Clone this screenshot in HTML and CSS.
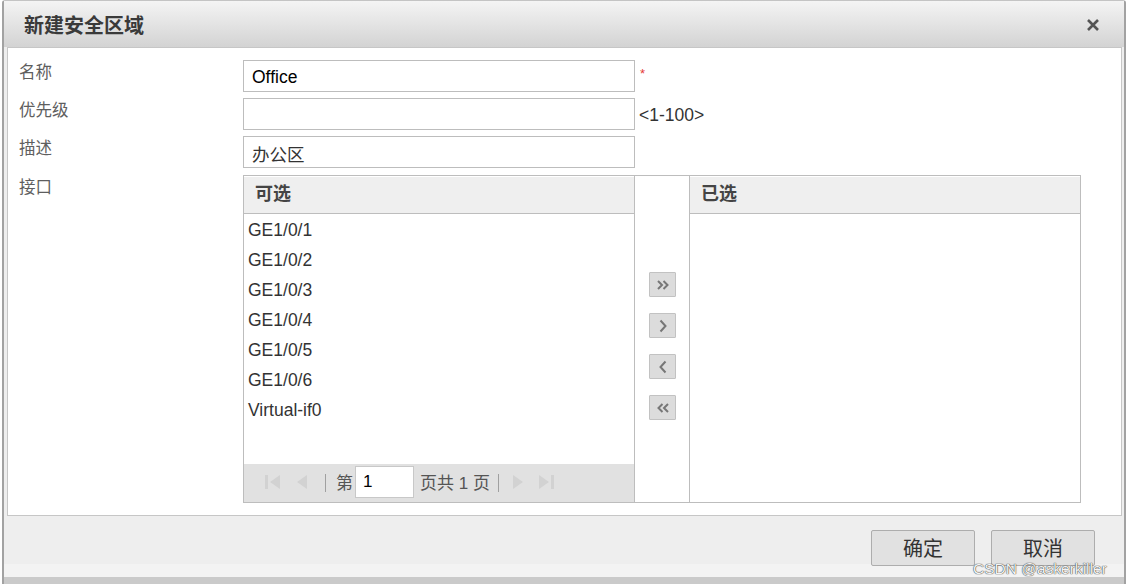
FILE: index.html
```html
<!DOCTYPE html>
<html lang="zh-CN">
  <head>
    <meta charset="utf-8" />
    <title>新建安全区域</title>
    <link rel="stylesheet" href="styles.css">
  </head>
  <body>
    <div class="dialog">
      <div class="dialog-header">
        <span class="dialog-title">新建安全区域</span>
        <span class="dialog-close" title="关闭">
          <svg width="14" height="14" viewBox="0 0 14 14"><path d="M2 2L12 12M12 2L2 12" stroke="#555" stroke-width="2.6" fill="none"/></svg>
        </span>
      </div>

      <div class="dialog-body">
        <div class="form-row">
          <label class="form-label">名称</label>
          <input class="form-input text-black" type="text" value="Office">
          <span class="required">*</span>
        </div>
        <div class="form-row">
          <label class="form-label">优先级</label>
          <input class="form-input" type="text" value="">
          <span class="form-hint">&lt;1-100&gt;</span>
        </div>
        <div class="form-row form-row-last">
          <label class="form-label">描述</label>
          <input class="form-input" type="text" value="办公区">
        </div>
        <div class="form-row">
          <label class="form-label">接口</label>
          <div class="transfer">
            <div class="transfer-panel">
              <div class="transfer-head">可选</div>
              <ul class="transfer-list">
                <li>GE1/0/1</li>
                <li>GE1/0/2</li>
                <li>GE1/0/3</li>
                <li>GE1/0/4</li>
                <li>GE1/0/5</li>
                <li>GE1/0/6</li>
                <li>Virtual-if0</li>
              </ul>
              <div class="pager">
                <svg class="pager-first" width="17" height="16" viewBox="0 0 17 16"><rect x="0" y="1" width="3" height="14" fill="#d2d2d2"/><path d="M15 1L5 8L15 15Z" fill="#d2d2d2"/></svg>
                <svg class="pager-prev" width="10" height="16" viewBox="0 0 10 16"><path d="M10 1L0 8L10 15Z" fill="#d2d2d2"/></svg>
                <span class="pager-sep"></span>
                <span class="pager-text">第</span>
                <input class="pager-input" type="text" value="1">
                <span class="pager-text pager-total">页共 1 页</span>
                <span class="pager-sep pager-sep-right"></span>
                <svg class="pager-next" width="11" height="16" viewBox="0 0 11 16"><path d="M0 1L10 8L0 15Z" fill="#d2d2d2"/></svg>
                <svg class="pager-last" width="17" height="16" viewBox="0 0 17 16"><path d="M1 1L11 8L1 15Z" fill="#d2d2d2"/><rect x="13" y="1" width="3" height="14" fill="#d2d2d2"/></svg>
              </div>
            </div>

            <div class="transfer-ops">
              <button class="op-btn" title="全部添加">
                <svg width="14" height="12" viewBox="0 0 14 12"><path d="M2 2L6 6L2 10M7.5 2L11.5 6L7.5 10" stroke="#777" stroke-width="2" fill="none"/></svg>
              </button>
              <button class="op-btn" title="添加">
                <svg width="12" height="14" viewBox="0 0 12 14"><path d="M3.5 1.5L8.5 7L3.5 12.5" stroke="#777" stroke-width="2" fill="none"/></svg>
              </button>
              <button class="op-btn" title="移除">
                <svg width="12" height="14" viewBox="0 0 12 14"><path d="M8.5 1.5L3.5 7L8.5 12.5" stroke="#777" stroke-width="2" fill="none"/></svg>
              </button>
              <button class="op-btn" title="全部移除">
                <svg width="14" height="12" viewBox="0 0 14 12"><path d="M6.5 2L2.5 6L6.5 10M12 2L8 6L12 10" stroke="#777" stroke-width="2" fill="none"/></svg>
              </button>
            </div>

            <div class="transfer-panel transfer-panel-right">
              <div class="transfer-head">已选</div>
              <ul class="transfer-list"></ul>
            </div>
          </div>
        </div>
      </div>

      <div class="dialog-footer">
        <button class="btn">确定</button>
        <button class="btn">取消</button>
      </div>
      <div class="dialog-bottom"></div>
    </div>

    <div class="watermark">CSDN @askerkiller</div>
  </body>
</html>
```

FILE: styles.css
```css
body {
  margin: 0;
  background: #ffffff;
  font-family: "Liberation Sans", "Noto Sans CJK SC", sans-serif;
  font-size: 17px;
  color: #333333;
}

.dialog {
  width: 1124px;
  margin-left: 2px;
  box-sizing: border-box;
  border-left: 2px solid #a2a2a2;
  border-right: 2px solid #a2a2a2;
  border-top: 1px solid #c4c4c4;
  border-radius: 3px 3px 0 0;
  background: #eeeeee;
}

.dialog-header {
  height: 46px;
  display: flex;
  align-items: center;
  justify-content: space-between;
  padding: 0 24px 0 20px;
  background: linear-gradient(#f4f4f4, #d3d3d3);
}

.dialog-title {
  font-family: "Noto Sans CJK SC", sans-serif;
  font-size: 20px;
  font-weight: bold;
  color: #3a3a3a;
}

.dialog-close {
  display: flex;
  margin-top: 2px;
}

.dialog-body {
  height: 455px;
  margin: 0 2px 0 3px;
  padding: 12px 0 0 0;
  background: #ffffff;
  border: 1px solid #c6c6c6;
}

.form-row {
  display: flex;
  align-items: flex-start;
  margin-bottom: 6px;
}

.form-row-last {
  margin-bottom: 7px;
}

.form-label {
  width: 224px;
  padding-left: 11px;
  line-height: 22px;
  font-family: "Noto Sans CJK SC", sans-serif;
  font-size: 16.5px;
  color: #5e5e5e;
}

.form-input {
  width: 392px;
  height: 32px;
  box-sizing: border-box;
  margin: 0;
  padding: 2px 8px 0;
  border: 1px solid #bdbdbd;
  font-family: "Liberation Sans", "Noto Sans CJK SC", sans-serif;
  font-size: 17.5px;
  color: #333333;
  outline: none;
}

.text-black {
  color: #000000;
}

.required {
  margin: 6px 0 0 5px;
  color: #e53935;
  font-size: 13px;
}

.form-hint {
  margin: 2px 0 0 4px;
  line-height: 30px;
  font-size: 17.5px;
  color: #333333;
}

.transfer {
  display: flex;
  height: 326px;
  border: 1px solid #bdbdbd;
}

.transfer-panel {
  width: 390px;
  display: flex;
  flex-direction: column;
  border-right: 1px solid #bdbdbd;
}

.transfer-panel-right {
  border-right: none;
}

.transfer-head {
  height: 36px;
  line-height: 30px;
  padding-left: 11px;
  border-top: 1px solid #ffffff;
  border-bottom: 1px solid #bdbdbd;
  background: #efefef;
  font-family: "Noto Sans CJK SC", sans-serif;
  font-size: 18px;
  font-weight: bold;
  color: #444444;
}

.transfer-list {
  flex: 1;
  list-style: none;
  margin: 0;
  padding: 1px 0 0 4px;
}

.transfer-list li {
  height: 30px;
  line-height: 30px;
  font-size: 17.5px;
  color: #333333;
}

.pager {
  height: 35px;
  display: flex;
  align-items: center;
  padding: 0 0 3px 21px;
  background: #e1e1e1;
}

.pager-prev {
  margin-left: 15px;
}

.pager-sep {
  width: 1px;
  height: 18px;
  margin: 2px 10px 0 18px;
  background: #a0a0a0;
}

.pager-sep-right {
  margin: 2px 14px 0 8px;
}

.pager-text {
  font-family: "Noto Sans CJK SC", sans-serif;
  font-size: 17px;
  color: #555555;
}

.pager-total {
  font-family: "Liberation Sans", "Noto Sans CJK SC", sans-serif;
}

.pager-input {
  width: 59px;
  height: 32px;
  box-sizing: border-box;
  margin: 0 6px 0 2px;
  padding: 0 7px;
  border: 1px solid #c8c8c8;
  font-family: "Liberation Sans", sans-serif;
  font-size: 17px;
  color: #000000;
  outline: none;
}

.pager-last {
  margin-left: 14px;
}

.transfer-ops {
  width: 54px;
  display: flex;
  flex-direction: column;
  align-items: center;
  gap: 16px;
  padding-top: 96px;
  border-right: 1px solid #bdbdbd;
}

.op-btn {
  width: 27px;
  height: 25px;
  display: flex;
  align-items: center;
  justify-content: center;
  margin-left: 1px;
  padding: 0;
  background: #dcdcdc;
  border: 1px solid #c2c2c2;
  border-radius: 1px;
}

.dialog-footer {
  height: 47px;
  display: flex;
  justify-content: flex-end;
  gap: 16px;
  padding: 14px 29px 0 0;
  background: linear-gradient(#eeeeee 78%, #f3f3f3 78%);
}

.btn {
  width: 104px;
  height: 36px;
  margin: 0;
  padding: 0;
  line-height: 24px;
  background: #e1e1e1;
  border: 1px solid #adadad;
  border-radius: 2px;
  font-family: "Noto Sans CJK SC", sans-serif;
  font-size: 20px;
  color: #333333;
}

.dialog-bottom {
  height: 7px;
  background: #cacaca;
}

.watermark {
  position: absolute;
  left: 973px;
  top: 563px;
  line-height: 12px;
  font-family: "Liberation Sans", sans-serif;
  font-size: 15.5px;
  color: #f4f4f4;
  text-shadow: 0 0 1px #333, 0 0 1px #333;
}
```
